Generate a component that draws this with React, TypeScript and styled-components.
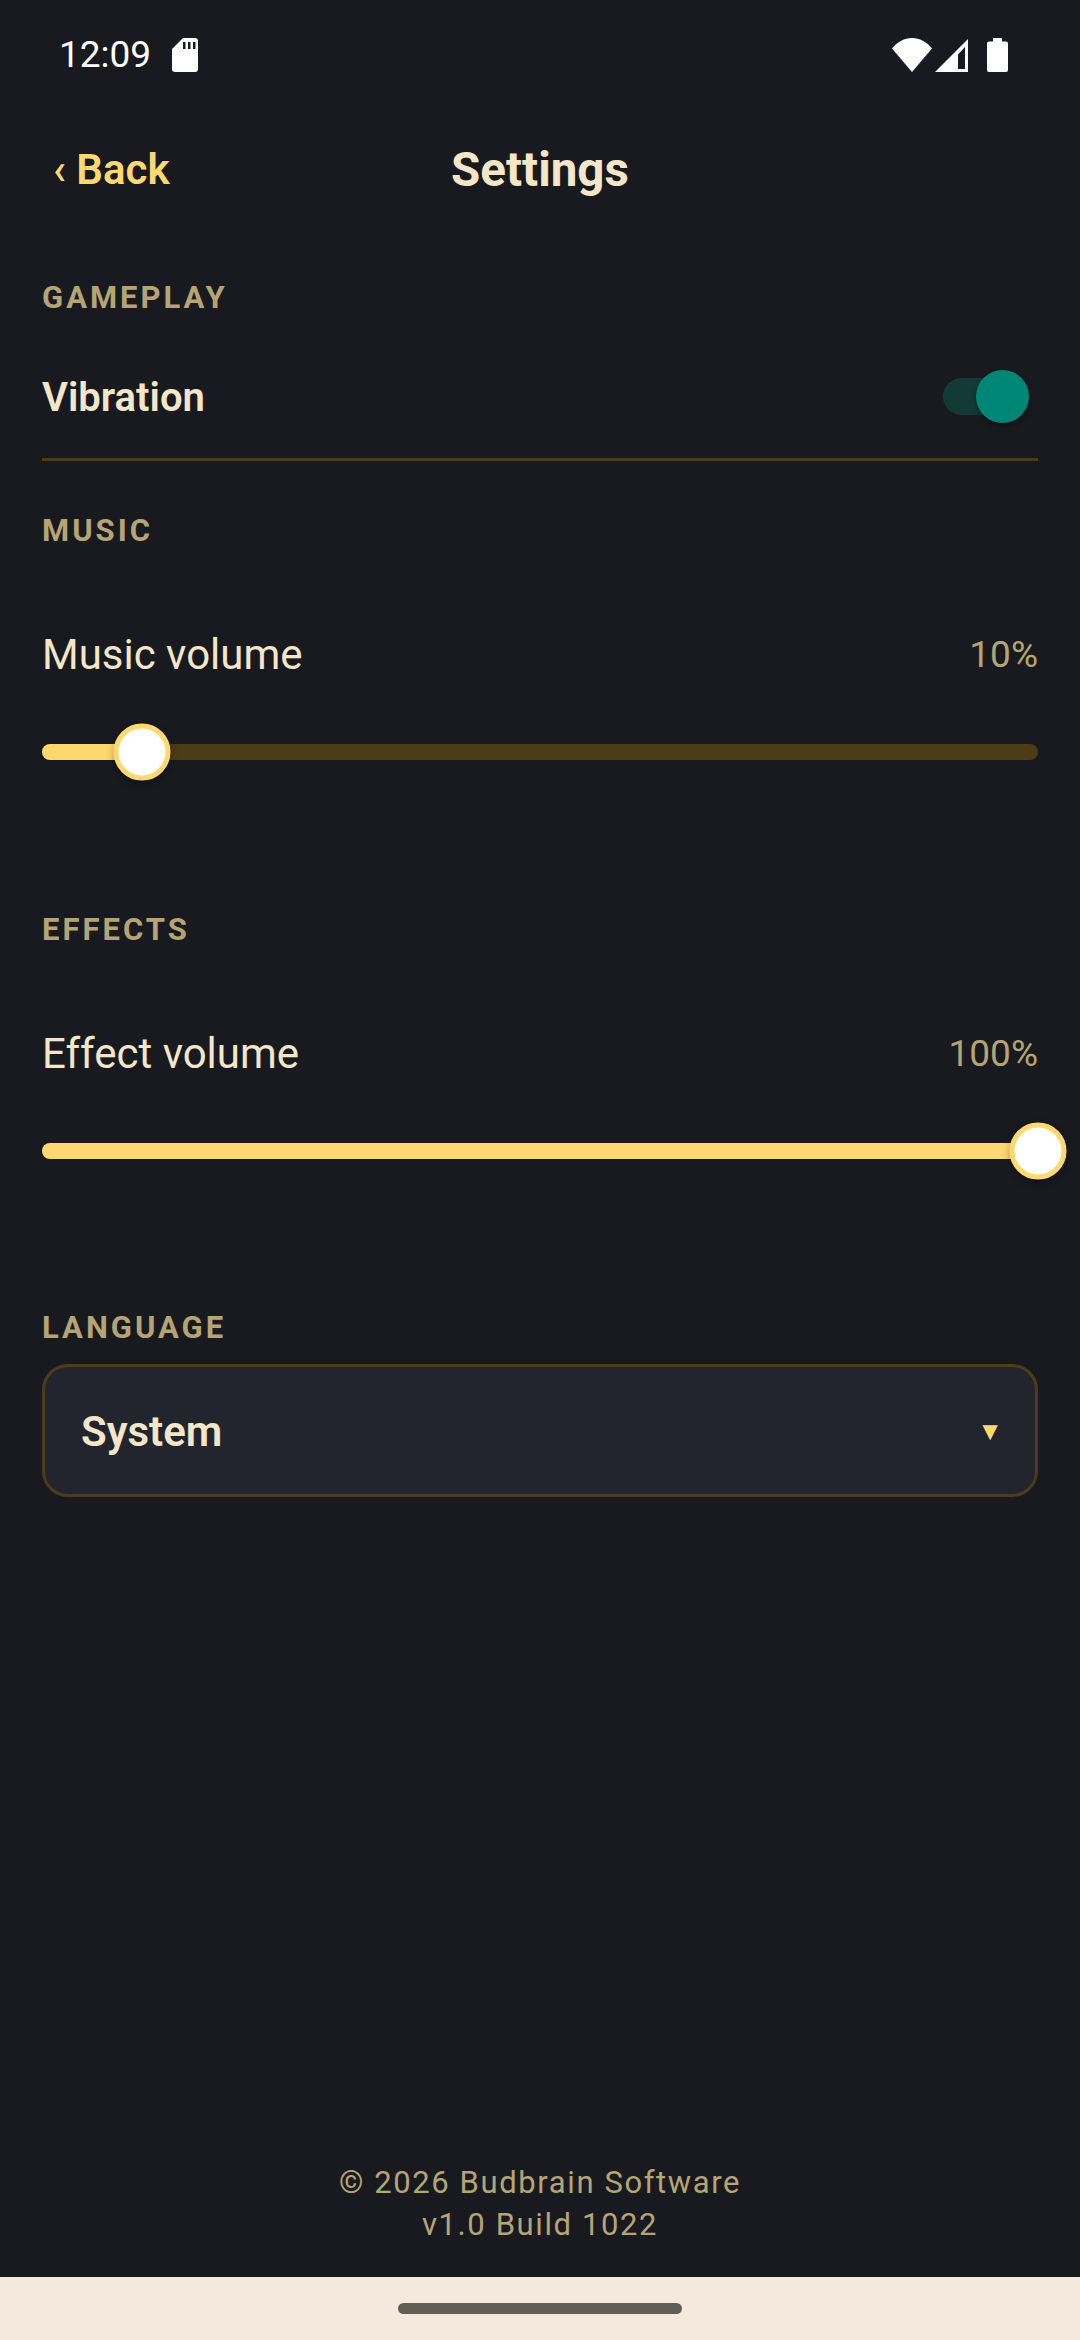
import React from 'react';
import styled, { createGlobalStyle } from 'styled-components';

const GlobalStyle = createGlobalStyle`
	html, body {
		margin: 0;
		padding: 0;
		background: #181a20;
	}
	* {
		box-sizing: border-box;
	}
`;

const SdIcon = () => (
	<svg width="26" height="34" viewBox="0 0 26 34">
		<path
			fill="#fff"
			fillRule="evenodd"
			d="M11 0H23a3 3 0 0 1 3 3V31a3 3 0 0 1-3 3H3a3 3 0 0 1-3-3V11ZM11 4V11H13.5V4ZM16 4V11H18.5V4ZM21 4V11H23.5V4Z"
		/>
	</svg>
);

const WifiIcon = () => (
	<svg width="40" height="34" viewBox="0 0 40 34">
		<path fill="#fff" d="M0 10.500C5.500 3.800 12.500 0 20 0s14.500 3.800 20 10.500L20 34Z" />
	</svg>
);

const SignalIcon = () => (
	<svg width="33" height="33" viewBox="0 0 33 33">
		<path
			fill="#fff"
			fillRule="evenodd"
			d="M33 0V33H0ZM30 8 23 15.500V30H30Z"
		/>
	</svg>
);

const BatteryIcon = () => (
	<svg width="21" height="34" viewBox="0 0 21 34">
		<path
			fill="#fff"
			d="M6 0H15V3.500H19a2 2 0 0 1 2 2V32a2 2 0 0 1-2 2H2a2 2 0 0 1-2-2V5.500a2 2 0 0 1 2-2H6Z"
		/>
	</svg>
);

const VolumeSlider = ({ label, value }: { label: string; value: number }) => (
	<VolumeBlock>
		<VolumeHead>
			<VolumeLabel>{label}</VolumeLabel>
			<VolumeValue>{value}%</VolumeValue>
		</VolumeHead>
		<Track>
			<Fill style={{ width: `${value}%` }} />
			<Thumb style={{ left: `${value}%` }} />
		</Track>
	</VolumeBlock>
);

export default function App() {
	return (
		<Page>
			<GlobalStyle />
			<StatusBar>
				<StatusLeft>
					<Clock>12:09</Clock>
					<SdIcon />
				</StatusLeft>
				<StatusRight>
					<WifiIcon />
					<SignalIcon />
					<BatterySlot>
						<BatteryIcon />
					</BatterySlot>
				</StatusRight>
			</StatusBar>

			<Header>
				<BackButton>
					<Chevron>‹</Chevron> Back
				</BackButton>
				<Title>Settings</Title>
			</Header>

			<Content>
				<SectionTitle $top={50}>GAMEPLAY</SectionTitle>
				<ToggleRow>
					<ToggleLabel>Vibration</ToggleLabel>
					<Switch>
						<SwitchKnob />
					</Switch>
				</ToggleRow>

				<SectionTitle $top={52}>MUSIC</SectionTitle>
				<VolumeSlider label="Music volume" value={10} />

				<SectionTitle $top={145}>EFFECTS</SectionTitle>
				<VolumeSlider label="Effect volume" value={100} />

				<SectionTitle $top={144}>LANGUAGE</SectionTitle>
				<Select>
					<SelectValue>System</SelectValue>
					<SelectArrow>▼</SelectArrow>
				</Select>
			</Content>

			<Footer>
				<FooterLine>© 2026 Budbrain Software</FooterLine>
				<FooterLine>v1.0 Build 1022</FooterLine>
			</Footer>

			<NavBar>
				<NavPill />
			</NavBar>
		</Page>
	);
}

const Page = styled.div`
	display: flex;
	flex-direction: column;
	width: 1080px;
	height: 2340px;
	background: #181a20;
	font-family: Roboto, 'Liberation Sans', sans-serif;
	overflow: hidden;
`;

const StatusBar = styled.div`
	display: flex;
	justify-content: space-between;
	align-items: center;
	height: 110px;
	padding: 0 72px 0 59px;
`;

const StatusLeft = styled.div`
	display: flex;
	align-items: center;
	gap: 21px;
`;

const Clock = styled.span`
	color: #fff;
	font-size: 37px;
	line-height: 44px;
`;

const StatusRight = styled.div`
	display: flex;
	align-items: center;
	gap: 3px;
`;

const BatterySlot = styled.div`
	display: flex;
	margin-left: 16px;
`;

const Header = styled.div`
	position: relative;
	display: flex;
	justify-content: center;
	align-items: center;
	height: 120px;
`;

const BackButton = styled.div`
	position: absolute;
	left: 53px;
	top: 32px;
	color: #ffd970;
	font-size: 42px;
	font-weight: 600;
	line-height: 56px;
`;

const Chevron = styled.span`
	font-weight: 500;
`;

const Title = styled.h1`
	margin: 0;
	color: #f3e6c9;
	font-size: 47.5px;
	font-weight: 700;
	line-height: 60px;
`;

const Content = styled.div`
	display: flex;
	flex-direction: column;
	padding: 0 42px;
`;

const SectionTitle = styled.div<{ $top: number }>`
	margin-top: ${({ $top }) => $top}px;
	color: #b5a575;
	font-size: 31px;
	font-weight: 700;
	letter-spacing: 3px;
	line-height: 36px;
`;

const ToggleRow = styled.div`
	display: flex;
	justify-content: space-between;
	align-items: center;
	height: 145px;
	padding-top: 20px;
	border-bottom: 3px solid #4b3c1b;
`;

const ToggleLabel = styled.span`
	color: #f3e6c9;
	font-size: 40px;
	font-weight: 600;
`;

const Switch = styled.div`
	position: relative;
	width: 68px;
	height: 37px;
	margin-right: 27px;
	margin-bottom: 2px;
	border-radius: 19px;
	background: #143a38;
`;

const SwitchKnob = styled.div`
	position: absolute;
	right: -18px;
	top: -8px;
	width: 53px;
	height: 53px;
	border-radius: 50%;
	background: #008675;
	box-shadow: 0 3px 6px rgba(0, 0, 0, 0.35);
`;

const VolumeBlock = styled.div`
	display: flex;
	flex-direction: column;
	margin-top: 80px;
`;

const VolumeHead = styled.div`
	display: flex;
	justify-content: space-between;
	align-items: center;
	height: 50px;
`;

const VolumeLabel = styled.span`
	color: #f3e6c9;
	font-size: 42px;
`;

const VolumeValue = styled.span`
	color: #b5a575;
	font-size: 37px;
`;

const Track = styled.div`
	position: relative;
	height: 16px;
	margin-top: 65px;
	margin-bottom: 7px;
	border-radius: 8px;
	background: #4c3c16;
`;

const Fill = styled.div`
	height: 100%;
	border-radius: 8px;
	background: #ffd970;
`;

const Thumb = styled.div`
	position: absolute;
	top: 50%;
	width: 57px;
	height: 57px;
	border: 5px solid #ffd970;
	border-radius: 50%;
	background: #fff;
	box-shadow: 0 3px 8px rgba(0, 0, 0, 0.3);
	transform: translate(-50%, -50%);
`;

const Select = styled.div`
	display: flex;
	justify-content: space-between;
	align-items: center;
	height: 133px;
	margin-top: 18px;
	padding: 2px 38px 0 36px;
	border: 3px solid #4b3c1b;
	border-radius: 26px;
	background: #22252e;
`;

const SelectValue = styled.span`
	color: #f3e6c9;
	font-size: 42px;
	font-weight: 600;
`;

const SelectArrow = styled.span`
	color: #ffd970;
	font-size: 26px;
	margin-right: -6px;
`;

const Footer = styled.div`
	display: flex;
	flex-direction: column;
	align-items: center;
	margin-top: auto;
	padding-bottom: 31px;
`;

const FooterLine = styled.div`
	color: #b5a575;
	font-size: 31px;
	letter-spacing: 1.6px;
	line-height: 42px;
`;

const NavBar = styled.div`
	display: flex;
	justify-content: center;
	align-items: center;
	height: 63px;
	background: #f3eadd;
`;

const NavPill = styled.div`
	width: 284px;
	height: 11px;
	border-radius: 6px;
	background: #625e55;
`;
